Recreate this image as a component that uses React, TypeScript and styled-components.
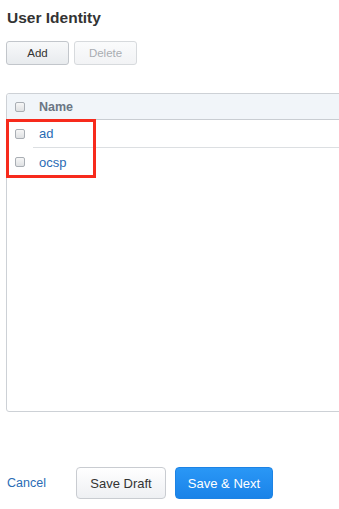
import React from "react";
import styled, { createGlobalStyle } from "styled-components";

const Global = createGlobalStyle`
  html, body { margin: 0; padding: 0; background: #fff; overflow: hidden; }
  body { font-family: "Liberation Sans", Arial, Helvetica, sans-serif; color: #333; }
`;

const Page = styled.div`
  width: 339px;
  height: 509px;
  overflow: hidden;
  padding: 9px 0 0 6px;
  box-sizing: border-box;
`;

const Title = styled.h1`
  margin: 0 0 0 1px;
  font-size: 15.5px;
  line-height: 18px;
  font-weight: 700;
  color: #333;
`;

const Toolbar = styled.div`
  display: flex;
  gap: 5px;
  margin-top: 14px;
`;

const SmallButton = styled.button<{ $disabled?: boolean }>`
  width: 63px;
  height: 24px;
  box-sizing: border-box;
  border-radius: 3px;
  border: 1px solid ${(p) => (p.$disabled ? "#d7dadd" : "#c2c6cb")};
  background: ${(p) =>
    p.$disabled
      ? "linear-gradient(#fafbfc, #f2f3f5)"
      : "linear-gradient(#f8f9fa, #e8ebee)"};
  color: ${(p) => (p.$disabled ? "#a9adb2" : "#333")};
  font-family: inherit;
  font-size: 11.5px;
  padding: 0;
`;

const Table = styled.div`
  margin-top: 28px;
  width: 345px;
  height: 319px;
  box-sizing: border-box;
  border: 1px solid #cdd1d6;
  border-radius: 3px;
  display: flex;
  flex-direction: column;
`;

const HeaderRow = styled.div`
  display: flex;
  align-items: center;
  height: 25px;
  background: #f1f5f9;
  border-bottom: 1px solid #c9cdd2;
  border-radius: 3px 0 0 0;
`;

const Rows = styled.div`
  position: relative;
  display: flex;
  flex-direction: column;
`;

const Row = styled.div`
  display: flex;
  align-items: stretch;
  height: 28px;
`;

const CheckCell = styled.div`
  width: 26px;
  display: flex;
  align-items: center;
  justify-content: flex-start;
  padding-left: 8px;
  box-sizing: border-box;
`;

const NameCell = styled.div<{ $border?: boolean; $header?: boolean }>`
  flex: 1;
  display: flex;
  align-items: center;
  padding-left: 6px;
  box-sizing: border-box;
  border-bottom: ${(p) => (p.$border ? "1px solid #dcdfe2" : "none")};
  font-size: ${(p) => (p.$header ? "12.5px" : "13px")};
  font-weight: ${(p) => (p.$header ? 700 : 400)};
  color: ${(p) => (p.$header ? "#6b7684" : "#2a6cb5")};
`;

const Check = styled.span`
  display: block;
  width: 10px;
  height: 10px;
  box-sizing: border-box;
  border: 1px solid #a9aeb4;
  border-radius: 2px;
  background: linear-gradient(#f6f6f6, #dfe1e3);
`;

const Highlight = styled.div`
  position: absolute;
  left: -1px;
  top: -1px;
  width: 90px;
  height: 59px;
  box-sizing: border-box;
  border: 3px solid #f72a1c;
  pointer-events: none;
`;

const Footer = styled.div`
  display: flex;
  align-items: center;
  margin-top: 55px;
  padding-left: 1px;
`;

const CancelLink = styled.a`
  font-size: 12.5px;
  color: #2a6cb5;
  text-decoration: none;
  margin-right: 30px;
  width: 39px;
`;

const BigButton = styled.button<{ $primary?: boolean }>`
  height: 32px;
  width: ${(p) => (p.$primary ? "98px" : "90px")};
  margin-right: 9px;
  box-sizing: border-box;
  border-radius: 4px;
  padding: 0;
  font-family: inherit;
  font-size: 13px;
  border: 1px solid ${(p) => (p.$primary ? "#1d83e4" : "#c9ccd1")};
  background: ${(p) =>
    p.$primary
      ? "linear-gradient(#2a97f6, #1a83e8)"
      : "linear-gradient(#ffffff, #eef0f3)"};
  color: ${(p) => (p.$primary ? "#fff" : "#333")};
`;

const rows = ["ad", "ocsp"];

export default function App() {
  return (
    <>
      <Global />
      <Page>
        <Title>User Identity</Title>
        <Toolbar>
          <SmallButton>Add</SmallButton>
          <SmallButton $disabled>Delete</SmallButton>
        </Toolbar>
        <Table>
          <HeaderRow>
            <CheckCell>
              <Check />
            </CheckCell>
            <NameCell $header>Name</NameCell>
          </HeaderRow>
          <Rows>
            {rows.map((r, i) => (
              <Row key={r}>
                <CheckCell>
                  <Check />
                </CheckCell>
                <NameCell $border={i < rows.length - 1}>{r}</NameCell>
              </Row>
            ))}
            <Highlight />
          </Rows>
        </Table>
        <Footer>
          <CancelLink href="#">Cancel</CancelLink>
          <BigButton>Save Draft</BigButton>
          <BigButton $primary>Save &amp; Next</BigButton>
        </Footer>
      </Page>
    </>
  );
}
